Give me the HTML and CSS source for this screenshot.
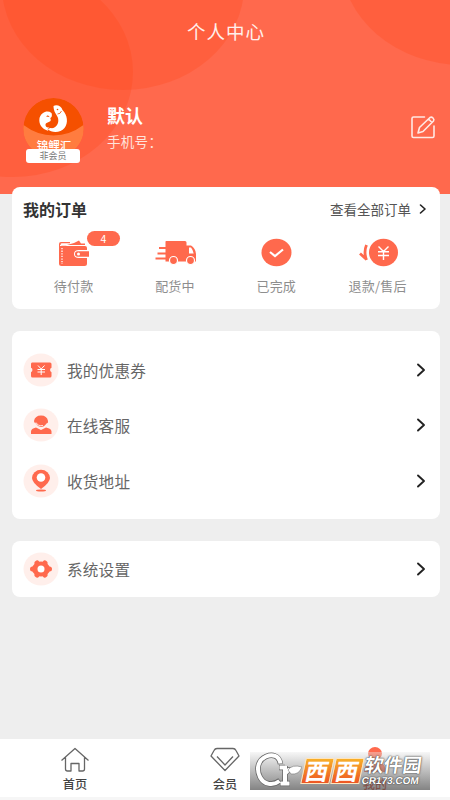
FILE: index.html
```html
<!DOCTYPE html>
<html lang="zh-CN">
<head>
<meta charset="UTF-8">
<meta name="viewport" content="width=device-width, initial-scale=1">
<title>个人中心</title>
<link rel="stylesheet" href="styles.css">
</head>
<body>
<div class="app">
  <header class="hero">
    <svg class="hero-bg" viewBox="0 0 450 194" aria-hidden="true">
      <g fill="#ff4719" fill-opacity=".28">
        <ellipse cx="13" cy="72" rx="120" ry="105"/>
        <ellipse cx="123" cy="-14" rx="121" ry="104"/>
        <ellipse cx="463" cy="-40" rx="122" ry="105"/>
      </g>
    </svg>
    <h1 class="title">个人中心</h1>
    <div class="profile">
      <div class="avatar">
        <svg class="avatar-art" viewBox="0 0 60 60" aria-hidden="true">
          <circle cx="30" cy="30" r="30" fill="#f55000"/>
          <path d="M0 27Q14 37.500 30 37.500T60 27Q62 45 48 54H12Q-2 45 0 27Z" fill="#ff7c3f"/>
          <path d="M30 8C33 6 38 8 39 12C44 17 45 25 41 30C37 35 28 35 24 31L27 30C32 31 36 26 34.500 20C33 16 30 14 30 8Z" fill="#fff"/>
          <path d="M25 33C18 31 15 26 16 20C18 14 24 12 28 15C29 18 28 20 26 20C26 17 23 17 23 19C26 18 28 21 27 23C25 25 22 24 22 27C22 29 24 30 26 29Q23 31 25 33Z" fill="#fff"/>
          <circle cx="34" cy="11.500" r=".8" fill="#f55000"/>
          <path d="M34 16Q37 16 38 13" fill="none" stroke="#f55000" stroke-width=".8"/>
        </svg>
        <span class="brand">锦鲤汇</span>
        <span class="level">非会员</span>
      </div>
      <div class="who">
        <strong class="name">默认</strong>
        <span class="phone">手机号：</span>
      </div>
      <svg class="edit" viewBox="0 0 26 26" fill="none" stroke="#ffe9e4" stroke-width="1.600" stroke-linecap="round" stroke-linejoin="round">
        <path d="M14.500 3H3.500Q2 3 2 4.500V22Q2 23.500 3.500 23.500H22.500Q24 23.500 24 22V12"/>
        <path d="M8 19L9.500 13.500L20 3.500Q21.500 2.500 23 4Q24.500 5.500 23.500 7L13 17.500ZM18.500 5L22 8.500"/>
      </svg>
    </div>
  </header>

  <main class="content">
    <section class="card orders">
      <div class="orders-head">
        <h2>我的订单</h2>
        <a class="all">查看全部订单<svg class="chev-sm" viewBox="0 0 8 10"><path d="M1.500 1L6 5L1.500 9"/></svg></a>
      </div>
      <div class="states">
        <div class="state">
          <svg viewBox="0 0 44 30">
            <path fill="#ff694d" d="M8 8H33Q35 8 35 10V12H27Q22 12 22 16T27 20H35V25.500Q35 28 32.500 28H9.500Q7 28 7 25.500V6Q7 4 9 4H18V5.200H10Q8.500 5.200 8.500 6.200T10 7.200H14L22 5L27 2.500L29 5.500H33V7H8Z"/>
            <path d="M10 10V26" stroke="#fff" stroke-width="1.300" stroke-dasharray="1.300 1.300"/>
            <path d="M25.500 13.200H37V18.800H25.500Q23 18.800 23 16T25.500 13.200Z" fill="#ff694d"/><circle cx="26.500" cy="16" r="1.500" fill="#fff"/>
          </svg>
          <span>待付款</span><b class="badge">4</b>
        </div>
        <div class="state">
          <svg viewBox="0 0 44 30">
            <path fill="#ff694d" d="M13 3H32Q33.500 3 33.500 4.500V7.500H38Q42.500 10 43 16V23.500H12.500V4Q12.500 3 13 3Z"/>
            <path d="M2.500 20.500H16M4.500 15.500H13M6 10H13" stroke="#ff694d" stroke-width="1.800"/>
            <path d="M36 9.500H38Q40 12 40.700 15.500H36Z" fill="#fff"/>
            <g fill="#ff694d" stroke="#fff" stroke-width="1.200"><circle cx="20.500" cy="22.500" r="4"/><circle cx="37.500" cy="22.500" r="4"/></g>
          </svg>
          <span>配货中</span>
        </div>
        <div class="state">
          <svg viewBox="0 0 44 30"><ellipse cx="22.500" cy="14.500" rx="15" ry="13.700" fill="#ff694d"/><path d="M16 14L21 18L29 11.500" fill="none" stroke="#fff" stroke-width="2.200"/></svg>
          <span>已完成</span>
        </div>
        <div class="state">
          <svg viewBox="0 0 44 30"><ellipse cx="27.500" cy="14.500" rx="14.500" ry="13.700" fill="#ff694d"/><path d="M22.500 8.500L27.500 13.500L32.500 8.500M22 13.800H33M22 17.500H33M27.500 13.500V22" fill="none" stroke="#fff" stroke-width="1.400"/><path d="M10.500 7Q7.500 14 10.500 22M4 15.500L10 21" fill="none" stroke="#ff694d" stroke-width="2.800"/></svg>
          <span>退款/售后</span>
        </div>
      </div>
    </section>

    <section class="card menu">
      <a class="row">
        <svg class="ico" viewBox="0 0 36 34"><ellipse class="halo" cx="18" cy="17" rx="17.500" ry="16.500"/><path class="hot" d="M9 9.500H27Q28.500 9.500 28.500 11V14.800A2.400 2.400 0 0 0 28.500 19.200V23Q28.500 24.500 27 24.500H9.500Q8 24.500 8 23V19.200A2.400 2.400 0 0 0 8 14.800V11Q8 9.500 9 9.500Z"/><path d="M15 12.500L18.200 16L21.500 12.500M14.500 16.500H22M14.500 19H22M18.200 16V22" fill="none" stroke="#fff"/></svg>
        <span>我的优惠券</span><svg class="chev" viewBox="0 0 10 14"><path d="M2 1.500L8 7L2 12.500"/></svg>
      </a>
      <a class="row">
        <svg class="ico" viewBox="0 0 36 34"><ellipse class="halo" cx="18" cy="17" rx="17.500" ry="16.500"/><path class="hot" d="M11 13Q12 7.500 18 7.500T25 13Q25.500 15 23.500 15.500Q21 19 18 19Q14 18 12.500 15Q11 15 11 13Z"/><path class="hot" d="M8 26V23.500Q8 20.500 13 19.500L18 22L23 19.500Q28.500 20.500 28.500 23.500V26Z"/><path d="M13 14.500Q15 18.500 20 17.500" fill="none" stroke="#fff" stroke-width=".8"/></svg>
        <span>在线客服</span><svg class="chev" viewBox="0 0 10 14"><path d="M2 1.500L8 7L2 12.500"/></svg>
      </a>
      <a class="row">
        <svg class="ico" viewBox="0 0 36 34"><ellipse class="halo" cx="18" cy="17" rx="17.500" ry="16.500"/><path class="hot" d="M18 25Q9 18.500 9 14A9 8.300 0 0 1 27 14Q27 18.500 18 25Z"/><circle cx="18" cy="13.500" r="4.300" fill="#fff"/><ellipse class="hot" cx="18" cy="26.500" rx="5" ry="1.100"/></svg>
        <span>收货地址</span><svg class="chev" viewBox="0 0 10 14"><path d="M2 1.500L8 7L2 12.500"/></svg>
      </a>
    </section>

    <section class="card settings">
      <a class="row">
        <svg class="ico" viewBox="0 0 36 34"><ellipse class="halo" cx="18" cy="17" rx="17.500" ry="16.500"/><g class="hot"><ellipse cx="18" cy="17" rx="9" ry="7.500"/><g stroke="#ff694d" stroke-width="5" stroke-linecap="round"><path d="M9.500 17H26.500M14 11L22 23M22 11L14 23"/></g></g><circle cx="18" cy="17" r="3.500" fill="#fff"/></svg>
        <span>系统设置</span><svg class="chev" viewBox="0 0 10 14"><path d="M2 1.500L8 7L2 12.500"/></svg>
      </a>
    </section>
  </main>

  <nav class="tabs">
    <a class="tab"><svg viewBox="0 0 30 26"><path d="M1.500 13.500L15 1.500L28.500 13.500M5.500 10.500V22Q5.500 24 7.500 24H11V16.500H19V24H22.500Q24.500 24 24.500 22V10.500"/></svg><span>首页</span></a>
    <a class="tab"><svg viewBox="0 0 30 26"><path d="M7 1.500H23Q25 1.500 26 3.500L29 9L15 23.500L1 9L4 3.500Q5 1.500 7 1.500ZM7 9.500L15 18L23 9.500"/></svg><span>会员</span></a>
    <a class="tab active"><svg viewBox="0 0 30 26"><ellipse cx="15" cy="6.500" rx="7" ry="6.500"/><path d="M4 25Q5 14 15 14T26 25Z"/></svg><span>我的</span></a>
  </nav>

  <div class="mark">
    <svg class="mark-cr" viewBox="0 0 50 38"><g fill="none" stroke-linejoin="round"><path d="M28.500 12C27 3 20 2 14 4.500C6 8 4 17 8 25C12 33 21 34 28 28.500M33 14V33M27 15.500H33M28 31.500H38M34 21Q36 17 40 18" stroke="#666" stroke-width="5.500"/><path d="M28.500 11.500C27 3 20 2 14 4.500C6 8 4 17 8 25C12 33 21 34 27.500 29M33 14V32.500M27.500 15.500H33M28.500 31.500H37.500M34 21Q36 17 40 18" stroke="#fff" stroke-width="4"/></g><path d="M36 18Q40 12 50 15Q47 23 39 22Z" fill="#fff" stroke="#777" stroke-width=".6"/></svg>
    <span class="xixi"><i>西</i><i>西</i></span>
    <span class="soft"><b>软件园</b><em>CR173.COM</em></span>
  </div>
</div>
</body>
</html>
```
FILE: styles.css
```css
* { box-sizing: border-box; }
body {
  margin: 0;
  background: #eee;
  font-family: "Noto Sans CJK SC", sans-serif;
  color: #666;
}
.app {
  position: relative;
  display: flex;
  flex-direction: column;
  height: 800px;
  overflow: hidden;
}
h1, h2 { margin: 0; }
.hero {
  position: relative;
  flex: none;
  height: 194px;
  background: #ff694d;
  color: #fff;
}
.hero-bg { position: absolute; inset: 0; width: 450px; height: 194px; }
.title {
  position: relative;
  padding-top: 17px;
  font-size: 18.5px;
  line-height: 28px;
  font-weight: 400;
  letter-spacing: 1px;
  text-align: center;
  text-indent: 2px;
  color: #fff0ec;
}
.profile {
  position: relative;
  display: flex;
  align-items: flex-start;
  padding: 53px 14px 0 23px;
}
.avatar { position: relative; width: 62px; height: 66px; }
.avatar-art { display: block; width: 61px; height: 60px; border-radius: 50%; }
.brand {
  position: absolute;
  left: 0;
  top: 38px;
  width: 62px;
  font-size: 11.5px;
  line-height: 18px;
  font-weight: 500;
  text-align: center;
}
.level {
  position: absolute;
  left: 3px;
  top: 51px;
  width: 54px;
  height: 14px;
  border-radius: 3px;
  background: #fff;
  color: #777;
  font-size: 9px;
  line-height: 13px;
  text-align: center;
}
.who { display: flex; flex-direction: column; margin: 4px 0 0 22px; }
.name { font-size: 18px; line-height: 26px; }
.phone { font-size: 13.5px; line-height: 24px; margin-top: 1px; color: #ffe3dc; letter-spacing: .3px; }
.edit { width: 26px; height: 26px; margin: 16px 0 0 auto; }
.content { flex: 1; padding: 0 10px 0 12px; margin-top: -7px; position: relative; }
.card { background: #fff; border-radius: 8px; }
.orders { height: 122px; }
.orders-head {
  display: flex;
  align-items: center;
  justify-content: space-between;
  height: 43px;
  padding: 0 13px 0 11px;
}
h2 { font-size: 16px; line-height: 24px; color: #333; font-weight: 700; }
.all { display: flex; align-items: center; gap: 8px; font-size: 13.5px; color: #555; }
.chev-sm { width: 8px; height: 10px; }
.chev, .chev-sm { fill: none; stroke: #222; stroke-width: 1.6; stroke-linecap: round; stroke-linejoin: round; }
.states { display: grid; grid-template-columns: repeat(4, 101.3px); padding-left: 11px; }
.state {
  position: relative;
  display: flex;
  flex-direction: column;
  align-items: center;
  padding-top: 8px;
  font-size: 13px;
  letter-spacing: .2px;
  color: #8e8e8e;
}
.state svg { width: 44px; height: 30px; }
.state span { line-height: 20px; margin-top: 8px; }
.badge {
  position: absolute;
  left: 64px;
  top: 1px;
  width: 33px;
  height: 15px;
  border-radius: 8px;
  background: #ff694d;
  color: #fff;
  font-size: 10.5px;
  line-height: 15px;
  font-weight: 400;
  text-align: center;
}
.menu { height: 188px; margin-top: 22px; padding: 11px 0; }
.settings { height: 56px; margin-top: 22px; }
.row { display: flex; align-items: center; height: 55.6px; padding: 0 14px 0 11px; font-size: 15.6px; letter-spacing: .2px; }
.row span { flex: 1; margin-left: 8px; line-height: 24px; }
.ico { width: 36px; height: 34px; }
.halo { fill: #ffefeb; }
.hot { fill: #ff694d; }
.chev { width: 10px; height: 14px; stroke-width: 1.9; }
.tabs {
  flex: none;
  display: grid;
  grid-template-columns: repeat(3, 1fr);
  height: 61px;
  background: #fff;
  border-bottom: 3px solid #f6f6f6;
}
.tab { display: flex; flex-direction: column; align-items: center; padding-top: 8px; font-size: 12.2px; font-weight: 500; color: #444; }
.tab svg { width: 30px; height: 26px; fill: none; stroke: #666; stroke-width: 1.3; stroke-linejoin: round; }
.tab span { line-height: 18px; margin-top: 2px; }
.active { color: #e03010; }
.active svg { fill: #ff694d; stroke: none; }
.mark {
  position: absolute;
  left: 250px;
  top: 752px;
  width: 180px;
  height: 38px;
  display: flex;
  background: linear-gradient(rgba(235, 235, 235, .4), rgba(90, 90, 90, .75));
}
.mark-cr { width: 50px; height: 38px; margin-left: 2px; }
.xixi { display: flex; gap: 1px; margin: 6px 0 0 1px; height: 26px; }
.xixi i {
  width: 28.5px;
  height: 26px;
  transform: skewX(-12deg);
  background: linear-gradient(#f8af28, #ee5524);
  color: #fff;
  border: 1px solid #ffe5bd;
  font-size: 23px;
  font-style: normal;
  font-weight: 700;
  line-height: 22px;
  text-align: center;
}
.soft { display: flex; flex-direction: column; margin-left: 3px; color: #fff; text-shadow: 0 0 1px #333, 0 0 2px #555; transform: skewX(-8deg); white-space: nowrap; }
.soft b { font-size: 19px; line-height: 22px; margin-top: 1px; }
.soft em { font: 700 10px/11px "Liberation Sans", sans-serif; margin-left: -1px; }
```
